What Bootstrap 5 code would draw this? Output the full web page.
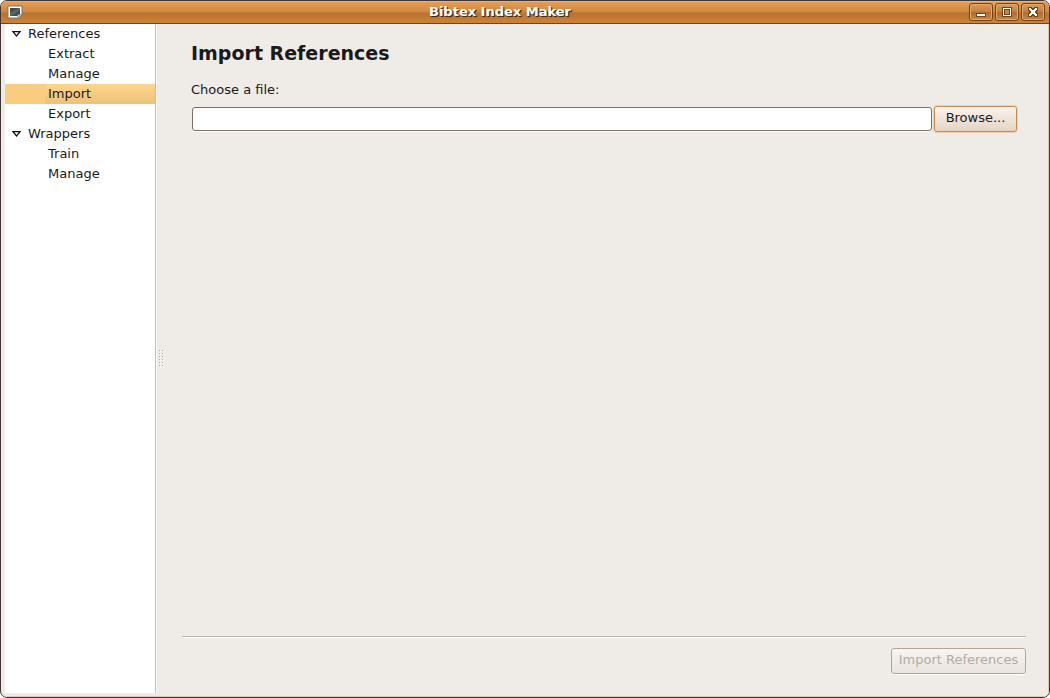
<!DOCTYPE html>
<html lang="en">
<head>
<meta charset="utf-8">
<meta name="viewport" content="width=device-width, initial-scale=1">
<title>Bibtex Index Maker</title>
<link rel="stylesheet" href="https://cdn.jsdelivr.net/npm/bootstrap@5.3.0/dist/css/bootstrap.min.css">
<style>
  body { font-family: "DejaVu Sans", sans-serif; font-size: 13px; line-height: 20px; color: #1a1a1a; background: #fff; }
  .app-window { background: #efebe7; border: 1px solid #3f3533; border-radius: 7px; overflow: hidden; }
  .titlebar { height: 23px; padding: 0 4px 2px 6px; border-top: 1px solid #eeb170; border-bottom: 1px solid #70441c;
    background: linear-gradient(#e59d53 0, #cf8640 48%, #b8732f 52%, #cd8238 100%); }
  .titlebar h1 { font-size: 13px; line-height: 19px; color: #fff; text-shadow: 1px 1px 1px #3a2a1a, 1px 1px 0 #5a3d22; }
  .win-btn { width: 24px; height: 18px; border: 1px solid #70441c; border-radius: 3px;
    background: linear-gradient(#dd9a58, #c58040 48%, #b06c2c 52%, #c98544); box-shadow: inset 0 0 0 1px #dfa972; }
  .win-buttons, .file-row { gap: 2px; }
  .app-side { width: 151px; border-right: 1px solid #c0c0c0; }
  .app-body { padding: 0 3px 4px 4px; box-shadow: inset -1px -1px 0 #d8cbbd; }
  .tree-link { display: flex; align-items: center; height: 20px; color: #1a1a1a; text-decoration: none; }
  .tree-parent { padding-left: 7px; gap: 7px; }
  .tree-child { padding-left: 43px; }
  .tree-link.active { background: linear-gradient(#f9cd80, #f9cd80) left / 40px 100% no-repeat, linear-gradient(#ffd58a, #ecc27b); }
  .splitter { width: 9px; border-left: 1px solid #fbf9f7; cursor: col-resize; }
  .page-pane { padding: 0 20px 19px 17px; }
  .page-form { padding: 0 9px; }
  .page-title { font-size: 19px; line-height: 24px; margin: 17px 0 15px; }
  .file-label { margin-bottom: 6px; }
  .file-box { height: 24px; padding: 0 4px; margin-left: 1px; font-size: 13px; border: 1px solid #7d7063; border-radius: 3px; box-shadow: 0 1px 0 #fff; }
  .soft-btn { height: 26px; padding: 0 6px 2px; font-size: 13px; line-height: 22px; white-space: nowrap; border-radius: 3px; border: 1px solid #b5a598; }
  .browse-btn { width: 83px; color: #1a1a1a; border-color: #c78d4e; background: linear-gradient(#faf3ed, #efe3d9 50%, #e4d4c5); box-shadow: 0 0 0 1px #f2cfa4; }
  .browse-btn:hover { border-color: #c78d4e; color: #1a1a1a; }
  .soft-btn:disabled { width: 135px; color: #b5aba2; opacity: 1; border-color: #b5a598; background: linear-gradient(#f7f4f2, #f0ece8 50%, #e8e3dd); box-shadow: 0 1px 0 #fff; }
  .pane-line { margin: 0 0 10px; border-top: 1px solid #b9b3ad; border-bottom: 1px solid #fff; opacity: 1; height: 2px; }
</style>
</head>
<body>
<div class="app-window d-flex flex-column vh-100">
  <header class="titlebar d-flex align-items-center flex-shrink-0">
    <svg width="16" height="16" viewBox="0 0 16 16" aria-hidden="true">
      <path d="M1 2h14v9l-3 3H1z" fill="#fff" stroke="#77766a"/>
      <path d="M3 4h10v6l-3 2H3z" fill="#424b4b"/>
      <path d="M3 9l8-5h2v2l-8 6H3z" fill="#596360"/>
      <path d="M11 13.500v-3h3z" fill="#dcded8" stroke="#85877d"/>
    </svg>
    <h1 class="flex-grow-1 text-center fw-bold m-0 ps-2">Bibtex Index Maker</h1>
    <div class="win-buttons d-flex">
      <button type="button" class="win-btn p-0 d-flex" aria-label="Minimize">
        <svg width="22" height="16" viewBox="0 0 22 16" shape-rendering="crispEdges"><path d="M6 9h10v4H6z" fill="#70441c"/><path d="M7 10h8v2H7z" fill="#fff"/></svg>
      </button>
      <button type="button" class="win-btn p-0 d-flex" aria-label="Maximize">
        <svg width="22" height="16" viewBox="0 0 22 16" shape-rendering="crispEdges"><path d="M6 3h10v10H6z" fill="#70441c"/><path d="M7 4h8v8H7z" fill="#fff"/><path d="M8 5h6v6H8z" fill="#70441c"/><path d="M9 6h4v4H9z" fill="#c88546"/></svg>
      </button>
      <button type="button" class="win-btn p-0 d-flex" aria-label="Close">
        <svg width="22" height="16" viewBox="0 0 22 16" shape-rendering="crispEdges"><path d="M6 3h4v1h2V3h4v4h-1v2h1v4h-4v-1h-2v1H6V9h1V7H6z" fill="#70441c"/><path d="M7 4h2v1h1v1h2V5h1V4h2v2h-1v1h-1v2h1v1h1v2h-2v-1h-1v-1h-2v1H9v1H7v-2h1V9h1V7H8V6H7z" fill="#fff"/></svg>
      </button>
    </div>
  </header>
  <div class="app-body d-flex flex-grow-1">
    <nav class="app-side bg-white flex-shrink-0" aria-label="Sections">
      <ul class="list-unstyled m-0">
        <li>
          <a href="#" class="tree-link tree-parent"><svg width="9" height="6" viewBox="0 0 9 6" aria-hidden="true"><path d="M1 .7h7L4.500 5z" fill="#fff" stroke="#111" stroke-width="1.200"/></svg>References</a>
          <ul class="list-unstyled m-0">
            <li><a href="#" class="tree-link tree-child">Extract</a></li>
            <li><a href="#" class="tree-link tree-child">Manage</a></li>
            <li><a href="#" class="tree-link tree-child active" aria-current="page">Import</a></li>
            <li><a href="#" class="tree-link tree-child">Export</a></li>
          </ul>
        </li>
        <li>
          <a href="#" class="tree-link tree-parent"><svg width="9" height="6" viewBox="0 0 9 6" aria-hidden="true"><path d="M1 .7h7L4.500 5z" fill="#fff" stroke="#111" stroke-width="1.200"/></svg>Wrappers</a>
          <ul class="list-unstyled m-0">
            <li><a href="#" class="tree-link tree-child">Train</a></li>
            <li><a href="#" class="tree-link tree-child">Manage</a></li>
          </ul>
        </li>
      </ul>
    </nav>
    <div class="splitter d-flex align-items-center flex-shrink-0">
      <svg width="8" height="18" viewBox="0 0 8 18" shape-rendering="crispEdges" aria-hidden="true">
        <defs><pattern id="grip" width="3" height="3" patternUnits="userSpaceOnUse" x="2"><path d="M1 1h1v1H1z" fill="#fff"/><path d="M0 0h1v1H0z" fill="#a9a49d"/></pattern></defs>
        <path d="M2 0h6v18H2z" fill="url(#grip)"/>
      </svg>
    </div>
    <main class="page-pane d-flex flex-column flex-grow-1">
      <form class="page-form flex-grow-1">
        <h2 class="page-title fw-bold">Import References</h2>
        <label for="file" class="file-label d-block">Choose a file:</label>
        <div class="file-row d-flex align-items-center">
          <input id="file" type="text" class="form-control file-box">
          <button type="button" class="btn soft-btn browse-btn flex-shrink-0">Browse...</button>
        </div>
      </form>
      <hr class="pane-line">
      <div class="d-flex justify-content-end">
        <button type="button" class="btn soft-btn" disabled>Import References</button>
      </div>
    </main>
  </div>
</div>
<script src="https://cdn.jsdelivr.net/npm/bootstrap@5.3.0/dist/js/bootstrap.bundle.min.js"></script>
</body>
</html>
